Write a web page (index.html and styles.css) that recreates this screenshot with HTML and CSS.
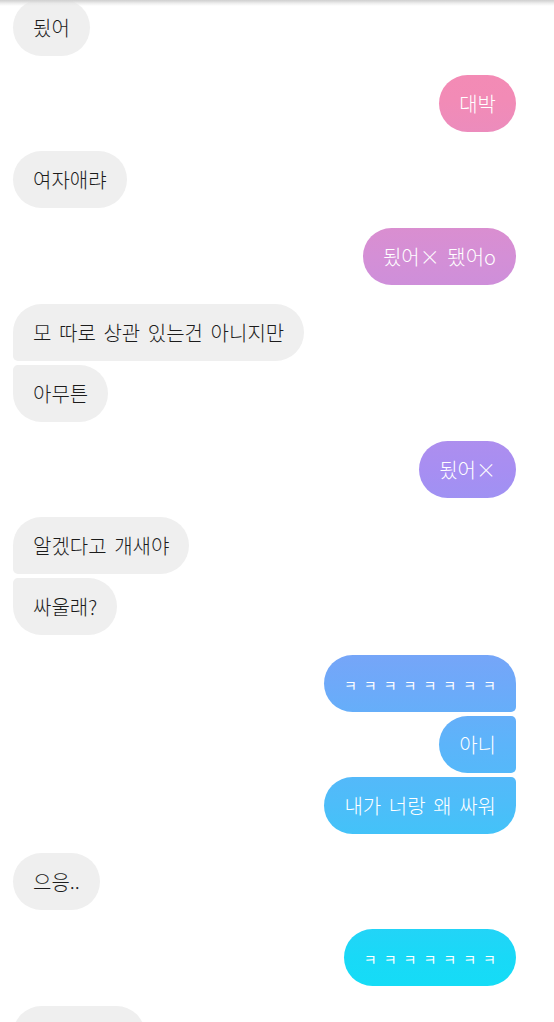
FILE: index.html
```html
<!DOCTYPE html>
<html lang="ko">
<head>
  <meta charset="UTF-8" />
  <title>Direct</title>
  <link rel="stylesheet" href="styles.css">
</head>
<body>
  <div class="top-edge"></div>

  <main class="thread">
    <div class="group them">
      <div class="bubble">됬어</div>
    </div>

    <div class="group me">
      <div class="bubble">대박</div>
    </div>

    <div class="group them">
      <div class="bubble">여자애랴</div>
    </div>

    <div class="group me">
      <div class="bubble">됬어× 됐어o</div>
    </div>

    <div class="group them">
      <div class="bubble">모 따로 상관 있는건 아니지만</div>
      <div class="bubble">아무튼</div>
    </div>

    <div class="group me">
      <div class="bubble">됬어×</div>
    </div>

    <div class="group them">
      <div class="bubble">알겠다고 개새야</div>
      <div class="bubble">싸울래?</div>
    </div>

    <div class="group me">
      <div class="bubble"><span class="kk">ㅋㅋㅋㅋㅋㅋㅋㅋ</span></div>
      <div class="bubble">아니</div>
      <div class="bubble">내가 너랑 왜 싸워</div>
    </div>

    <div class="group them">
      <div class="bubble">으응..</div>
    </div>

    <div class="group me">
      <div class="bubble"><span class="kk">ㅋㅋㅋㅋㅋㅋㅋ</span></div>
    </div>

    <div class="group them">
      <div class="bubble cut"></div>
    </div>
  </main>
</body>
</html>
```

FILE: styles.css
```css
:root {
  --grey: #efefef;
  --ink: #1c1c1c;
  --radius: 29px;
  --corner: 5px;
}

* {
  box-sizing: border-box;
}

body, html {
  margin: 0;
  background: #fff;
  font-family: 'Noto Sans CJK KR', 'Noto Sans', sans-serif;
  overflow: hidden;
}

.top-edge {
  position: fixed;
  top: 0;
  left: 0;
  width: 100%;
  height: 6px;
  background: linear-gradient(to bottom, #cfcfcf, rgba(230,230,230,0.6) 60%, rgba(255,255,255,0));
  z-index: 10;
}

.thread {
  display: flex;
  flex-direction: column;
  gap: 19.3px;
  padding: 0 38px 0 13px;
  margin-top: -1.3px;
}

.group {
  display: flex;
  flex-direction: column;
  gap: 4px;
}

.group.them {
  align-items: flex-start;
}

.group.me {
  align-items: flex-end;
}

.bubble {
  height: 57px;
  line-height: 57px;
  padding: 0 20px;
  font-size: 20px;
  font-weight: 300;
  word-spacing: 2px;
  white-space: nowrap;
  border-radius: var(--radius);
}

.them .bubble {
  background: var(--grey);
  color: var(--ink);
}

.me .bubble {
  color: #fff;
  /* one gradient for the whole screen, bubbles show their slice of it */
  background: linear-gradient(to bottom,
    #f78ab2 0px,
    #f28bb6 100px,
    #d48fd6 256px,
    #a78ef2 470px,
    #6ea9f9 683px,
    #5cb4fa 744px,
    #4dbdf9 804px,
    #19d9f7 957px,
    #10e0f5 1022px);
  background-attachment: fixed;
}

/* grouped bubbles get a tight corner on the sender side */
.them .bubble:not(:last-child) {
  border-bottom-left-radius: var(--corner);
}

.them .bubble:not(:first-child) {
  border-top-left-radius: var(--corner);
}

.me .bubble:not(:last-child) {
  border-bottom-right-radius: var(--corner);
}

.me .bubble:not(:first-child) {
  border-top-right-radius: var(--corner);
}

.kk {
  font-size: 14px;
  font-weight: 400;
  letter-spacing: 7px;
  margin-right: -7px;
  vertical-align: 1px;
}

.bubble.cut {
  width: 132px;
}
```
